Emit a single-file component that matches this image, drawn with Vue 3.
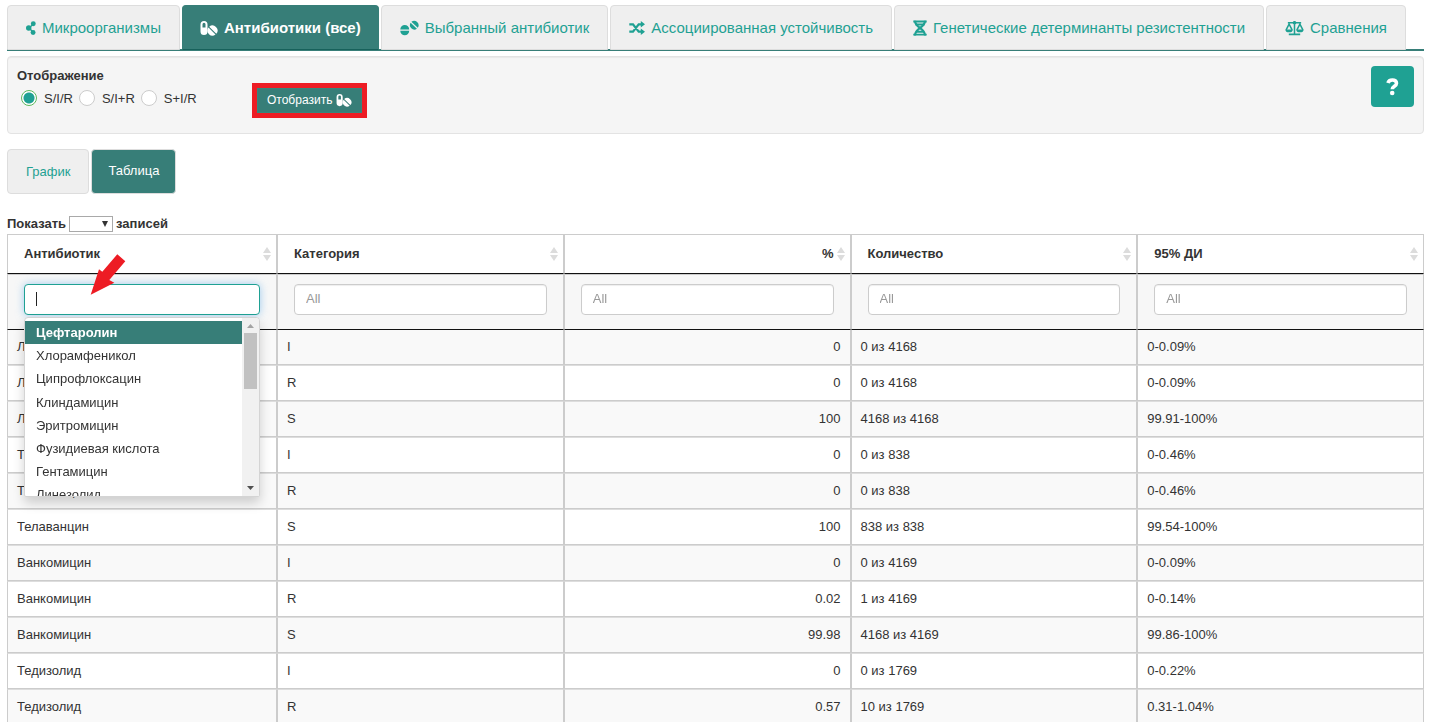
<script setup>
import { ref, onMounted } from 'vue'

const tabs = [
  { icon: 'nodes', w: 10, label: 'Микроорганизмы' },
  { icon: 'pills', w: 18, label: 'Антибиотики (все)', active: true },
  { icon: 'tablets', w: 19, label: 'Выбранный антибиотик' },
  { icon: 'shuffle', w: 16, label: 'Ассоциированная устойчивость' },
  { icon: 'dna', w: 14, label: 'Генетические детерминанты резистентности' },
  { icon: 'scales', w: 19, label: 'Сравнения' },
]
const modes = ['S/I/R', 'S/I+R', 'S+I/R']
const mode = ref('S/I/R')
const columns = ['Антибиотик', 'Категория', '%', 'Количество', '95% ДИ']
const options = ['Цефтаролин', 'Хлорамфеникол', 'Ципрофлоксацин', 'Клиндамицин', 'Эритромицин', 'Фузидиевая кислота', 'Гентамицин', 'Линезолид']
const rows = [
  ['Линезолид', 'I', '0', '0 из 4168', '0-0.09%'],
  ['Линезолид', 'R', '0', '0 из 4168', '0-0.09%'],
  ['Линезолид', 'S', '100', '4168 из 4168', '99.91-100%'],
  ['Телаванцин', 'I', '0', '0 из 838', '0-0.46%'],
  ['Телаванцин', 'R', '0', '0 из 838', '0-0.46%'],
  ['Телаванцин', 'S', '100', '838 из 838', '99.54-100%'],
  ['Ванкомицин', 'I', '0', '0 из 4169', '0-0.09%'],
  ['Ванкомицин', 'R', '0.02', '1 из 4169', '0-0.14%'],
  ['Ванкомицин', 'S', '99.98', '4168 из 4169', '99.86-100%'],
  ['Тедизолид', 'I', '0', '0 из 1769', '0-0.22%'],
  ['Тедизолид', 'R', '0.57', '10 из 1769', '0.31-1.04%'],
]
const search = ref('')
const searchBox = ref(null)
onMounted(() => searchBox.value[0].focus())
</script>

<template>
  <svg class="defs" aria-hidden="true">
    <symbol id="nodes" viewBox="0 0 11 16">
      <path d="M8.5 3.5 3 8l5 4.500" fill="none" stroke="currentColor" stroke-width="1.500" />
      <circle cx="8" cy="3.300" r="2.700" /><circle cx="3" cy="8" r="3" /><circle cx="7.800" cy="13" r="2.700" />
    </symbol>
    <symbol id="pills" viewBox="0 0 18 16">
      <path fill-rule="evenodd" d="M4 1a3.500 3.500 0 0 1 3.500 3.500v7a3.500 3.500 0 0 1-7 0v-7A3.500 3.500 0 0 1 4 1Zm0 1.800a1.500 1.500 0 0 0-1.500 1.500V7.500h3V4.300A1.500 1.500 0 0 0 4 2.800Z" />
      <path d="M9.200 6.800a5 5 0 0 1 7.100 7ZM8.500 7.600a5 5 0 0 0 7 7Z" />
    </symbol>
    <symbol id="tablets" viewBox="0 0 20 16">
      <path d="M.3 9.600a4.700 4.700 0 0 1 9.400 0ZM.3 11a4.700 4.700 0 0 0 9.400 0Z" />
      <path d="M12 1.400a4.700 4.700 0 0 1 6.700 6.400ZM11.200 2.400a4.700 4.700 0 0 0 6.600 6.400Z" />
    </symbol>
    <symbol id="shuffle" viewBox="0 0 16 16">
      <path d="M.3 4.300H4L9.700 11.700h3M.3 11.700H4L9.700 4.300h3" fill="none" stroke="currentColor" stroke-width="2.200" />
      <path d="M11.800 1 16 4.300 11.800 7.600ZM11.800 8.400l4.200 3.300-4.200 3.300Z" />
    </symbol>
    <symbol id="dna" viewBox="0 0 14 16">
      <path d="M2 .8C2 8 12 8 12 15.500M12 .8C12 8 2 8 2 15.500" fill="none" stroke="currentColor" stroke-width="2.200" />
      <path d="M.3 1.500h13.400M2.500 4.500h9M3 11.800h8M.3 14.600h13.400" fill="none" stroke="currentColor" stroke-width="1.900" />
    </symbol>
    <symbol id="scales" viewBox="0 0 20 16">
      <path d="M3 2.500h14M10 1v13M4 14.700h12M1.200 10 4.300 4 7.500 10M12.500 10l3.200-6 3.100 6" fill="none" stroke="currentColor" stroke-width="1.600" />
      <path d="M.4 9.500h7.800a3.900 3 0 0 1-7.800 0ZM11.800 9.500h7.800a3.900 3 0 0 1-7.800 0Z" /><circle cx="10" cy="2.500" r="1.900" />
    </symbol>
  </svg>

  <main class="page">
    <nav class="tabs">
      <a v-for="t in tabs" :key="t.label" href="#" class="tab" :class="{ active: t.active }">
        <svg class="icon" :width="t.w" height="16" aria-hidden="true"><use :href="'#' + t.icon" /></svg>
        <span>{{ t.label }}</span>
      </a>
    </nav>

    <section class="panel">
      <fieldset class="modes">
        <legend>Отображение</legend>
        <div class="choices">
          <label v-for="m in modes" :key="m"><input v-model="mode" type="radio" name="mode" :value="m" />{{ m }}</label>
        </div>
      </fieldset>
      <div class="highlight">
        <button class="show" type="button">
          Отобразить
          <svg width="16" height="14" aria-hidden="true"><use href="#pills" /></svg>
        </button>
      </div>
      <button class="help" type="button" aria-label="Справка">
        <svg width="13" height="18" viewBox="0 0 13 18" aria-hidden="true">
          <path d="M2 5C3 .8 10.500 1 10.500 5.200c0 3-4.200 3-4.200 6" fill="none" stroke="currentColor" stroke-width="3.600" />
          <circle cx="6.200" cy="15" r="2.300" />
        </svg>
      </button>
    </section>

    <nav class="views">
      <a href="#" class="view">График</a>
      <a href="#" class="view active">Таблица</a>
    </nav>

    <label class="length">Показать
      <span class="pick"><select><option></option></select></span>
      записей</label>

    <table>
      <colgroup><col class="first" /><col /><col /><col /><col /></colgroup>
      <thead>
        <tr class="titles">
          <th v-for="(c, i) in columns" :key="c" scope="col" :class="{ num: i === 2 }">
            {{ c }}
            <svg class="sort" width="8" height="14" viewBox="0 0 8 14" aria-hidden="true"><path d="M4 0 8 6H0ZM0 8h8l-4 6Z" /></svg>
          </th>
        </tr>
        <tr class="filters">
          <td v-for="(c, i) in columns" :key="c">
            <div class="field">
              <input v-if="i === 0" ref="searchBox" v-model="search" type="text" :aria-label="c" class="focused" />
              <input v-else type="text" placeholder="All" :aria-label="c" />
              <template v-if="i === 0">
                <span v-if="!search" class="caret"></span>
                <div class="dropdown">
                  <ul role="listbox">
                    <li v-for="(o, n) in options" :key="o" role="option" :class="{ selected: n === 0 }">{{ o }}</li>
                  </ul>
                  <div class="scrollbar">
                    <svg width="7" height="4" viewBox="0 0 7 4" aria-hidden="true"><path d="M0 4h7L3.500 0Z" fill="#a3a3a3" /></svg>
                    <div class="thumb"></div>
                    <svg width="7" height="4" viewBox="0 0 7 4" aria-hidden="true"><path d="M0 0h7L3.500 4Z" fill="#505050" /></svg>
                  </div>
                </div>
                <svg class="arrow" width="36" height="42" viewBox="0 0 36 42" aria-hidden="true">
                  <path d="M.7 41.700 9 16.300l3.300 2.400L27.300 1.300l8 7L19.300 27l5 2.700Z" fill="#ed1c24" />
                </svg>
              </template>
            </div>
          </td>
        </tr>
      </thead>
      <tbody>
        <tr v-for="(r, i) in rows" :key="i">
          <td v-for="(v, j) in r" :key="j" :class="{ num: j === 2 }">{{ v }}</td>
        </tr>
      </tbody>
    </table>
  </main>
</template>

<style>
body { overflow: hidden; }
</style>

<style scoped>
* { box-sizing: border-box; }
.defs { position: absolute; width: 0; height: 0; }
svg { fill: currentColor; flex: none; }
.page {
  height: 100vh;
  overflow: hidden;
  padding: 5px 9px 0 7px;
  background: #fff;
  color: #333;
  font: 13px/18px "Liberation Sans", Arial, sans-serif;
}
a { text-decoration: none; }

.tabs { display: flex; gap: 2px; border-bottom: 2px solid #377e78; }
.tab {
  display: flex;
  align-items: center;
  gap: 6px;
  height: 45px;
  margin-bottom: -1px;
  padding: 0 18px;
  border: 1px solid #ddd;
  border-radius: 4px 4px 0 0;
  background: #efefef;
  color: #1fa193;
  font-size: 15px;
  white-space: nowrap;
}
.tab.active { background: #377e78; border-color: #377e78 #377e78 #17615b; color: #fff; font-weight: bold; padding: 0 17px; }

.panel {
  display: flex;
  align-items: flex-start;
  margin-top: 5px;
  height: 78px;
  padding: 9px;
  border: 1px solid #e3e3e3;
  border-radius: 4px;
  background: #f5f5f5;
  box-shadow: inset 0 1px 1px rgba(0, 0, 0, 0.05);
}
.modes { width: 235px; margin: 0; padding: 0; border: 0; }
.modes legend { padding: 1px 0 0; font-weight: bold; }
.choices { display: flex; gap: 6px; margin-top: 5px; padding-left: 4px; }
.choices label { display: flex; align-items: center; gap: 7px; }
.choices input {
  appearance: none;
  width: 16px;
  height: 16px;
  margin: 0 0 2px;
  border: 1px solid #ccc;
  border-radius: 50%;
  background: #fff;
}
.choices input:checked { border-color: #5cb85c; background: radial-gradient(circle, #1fa193 5px, #fff 6px); }
.highlight { margin-top: 17px; border: 5px solid #ed1c24; }
.show {
  display: flex;
  align-items: center;
  gap: 4px;
  height: 25px;
  padding: 0 9px 2px;
  border: 1px solid #37857c;
  background: #377e78;
  color: #fff;
  font: 12px/18px "Liberation Sans", Arial, sans-serif;
}
.help {
  display: grid;
  place-items: center;
  width: 43px;
  height: 41px;
  margin-left: auto;
  padding: 0;
  border: 0;
  border-radius: 4px;
  background: #1fa193;
  color: #fff;
}

.views { display: flex; gap: 2px; margin-top: 15px; }
.view { padding: 12px 18px; border: 1px solid #ddd; border-radius: 4px; background: #efefef; color: #1fa193; line-height: 19px; }
.view.active { padding: 11px 16px 13px; background: #377e78; color: #fff; }

.length { display: flex; gap: 3px; align-items: center; width: fit-content; margin-top: 21px; font-weight: bold; }
.pick { position: relative; display: flex; }
.pick::after {
  content: "";
  position: absolute;
  right: 5px;
  top: 5px;
  border: solid transparent;
  border-width: 6px 3px 0;
  border-top-color: #333;
}
.pick select { appearance: none; width: 44px; height: 16px; border: 1px solid #a9a9a9; background: #fff; }

table { width: 100%; margin-top: 1px; table-layout: fixed; border-collapse: separate; border-spacing: 0; }
.first { width: 270px; }
th, td { border: 1px solid #ccc; }
th { position: relative; padding: 10px 16px; border-bottom-color: #111; text-align: left; color: #333; }
.sort { position: absolute; right: 5px; top: 12px; color: #dcdcdc; }
.filters td { padding: 9px 16px 14px; border-bottom-color: #111; background: #f7f7f7; }
.field { position: relative; }
.field input {
  display: block;
  width: 100%;
  height: 31px;
  padding: 0 11px 2px;
  border: 1px solid #ccc;
  border-radius: 4px;
  outline: 0;
  background: #fff;
  color: #333;
  font: 13px "Liberation Sans", Arial, sans-serif;
  box-shadow: inset 0 1px 1px rgba(0, 0, 0, 0.07);
}
.field input::placeholder { color: #999; }
.field input.focused { border-color: #1fa193; box-shadow: 0 0 8px rgba(102, 175, 233, 0.6); caret-color: transparent; }
.caret { position: absolute; left: 12px; top: 8px; width: 1px; height: 14px; background: #222; }
.dropdown {
  position: absolute;
  z-index: 1;
  top: 33px;
  left: 0;
  right: 0;
  display: flex;
  height: 180px;
  border: 1px solid #d4d4d4;
  border-radius: 4px 4px 2px 2px;
  overflow: hidden;
  background: #fff;
  box-shadow: 0 6px 12px rgba(0, 0, 0, 0.18);
}
.dropdown ul { flex: 1; margin: 0; padding: 3px 0 0; list-style: none; line-height: 1.4; }
.dropdown li { padding: 3px 11px 2px; }
.dropdown li.selected { background: #377e78; color: #fff; font-weight: bold; }
.scrollbar { display: flex; flex-direction: column; align-items: center; width: 17px; padding: 6px 0; background: #f1f1f1; }
.thumb { width: 13px; height: 56px; margin: 5px 0 auto; background: #c1c1c1; }
.arrow { position: absolute; z-index: 2; left: 66px; top: -31px; }
tbody td { padding: 8px 9px; border-top-color: #ddd; }
tbody tr:first-child td { border-top: 0; }
tbody tr:nth-child(odd) td { background: #f9f9f9; }
.num { text-align: right; }
</style>
